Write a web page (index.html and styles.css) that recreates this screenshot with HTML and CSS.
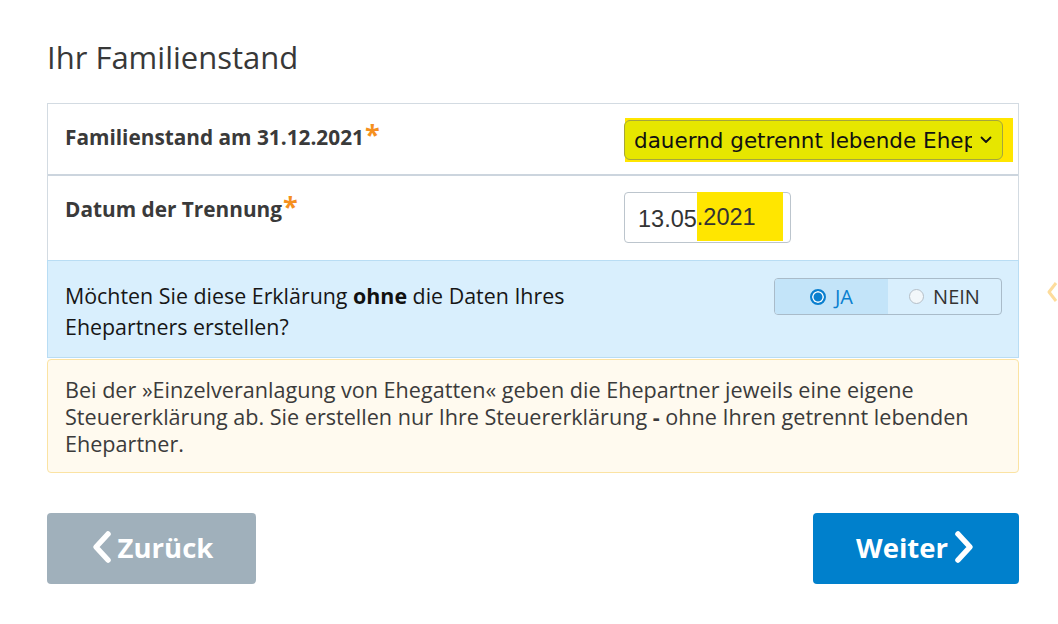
FILE: index.html
```html
<!DOCTYPE html>
<html lang="de">
  <head>
    <meta charset="UTF-8" />
    <meta name="viewport" content="width=device-width, initial-scale=1.0" />
    <title>Ihr Familienstand</title>
    <link rel="stylesheet" href="styles.css">
  </head>
  <body>
    <main class="page">
      <h1>Ihr Familienstand</h1>

      <section class="fields">
        <div class="field field-first">
          <label class="field-label">Familienstand am 31.12.2021<span class="req">*</span></label>
          <div class="field-control">
            <div class="marker">
              <div class="select-box">
                <span class="select-text">dauernd getrennt lebende Ehepartner</span>
                <svg class="select-arrow" width="12" height="8" viewBox="0 0 12 8">
                  <path d="M1.5 1.5 L6 6 L10.5 1.5" fill="none" stroke="#111" stroke-width="1.8" stroke-linecap="round" stroke-linejoin="round"/>
                </svg>
              </div>
            </div>
          </div>
        </div>

        <div class="field">
          <label class="field-label">Datum der Trennung<span class="req">*</span></label>
          <div class="field-control">
            <div class="date-box">13.05<mark>.2021</mark></div>
          </div>
        </div>
      </section>

      <section class="question">
        <p class="question-text">Möchten Sie diese Erklärung <strong>ohne</strong> die Daten Ihres Ehepartners erstellen?</p>
        <div class="toggle">
          <span class="toggle-option selected"><span class="radio"></span>JA</span>
          <span class="toggle-option"><span class="radio"></span>NEIN</span>
        </div>
      </section>

      <!-- Hinweis -->
      <div class="info">
        Bei der »Einzelveranlagung von Ehegatten« geben die Ehepartner jeweils eine eigene
        Steuererklärung ab. Sie erstellen nur Ihre Steuererklärung <b>-</b> ohne Ihren getrennt lebenden
        Ehepartner.
      </div>

      <div class="actions">
        <button class="btn btn-back">
          <svg width="24" height="34" viewBox="0 0 24 34">
            <path d="M18 4 L6 17 L18 30" fill="none" stroke="#fff" stroke-width="5.5" stroke-linecap="round" stroke-linejoin="round"/>
          </svg>
          Zurück
        </button>
        <button class="btn btn-next">
          Weiter
          <svg width="24" height="34" viewBox="0 0 24 34">
            <path d="M6 4 L18 17 L6 30" fill="none" stroke="#fff" stroke-width="5.5" stroke-linecap="round" stroke-linejoin="round"/>
          </svg>
        </button>
      </div>

      <svg class="edge-arrow" width="14" height="22" viewBox="0 0 14 22">
        <path d="M10 2 L3 11 L10 20" fill="none" stroke="#fddc9c" stroke-width="3" stroke-linejoin="round"/>
      </svg>
    </main>
  </body>
</html>
```

FILE: styles.css
```css
body {
  margin: 0;
  font-family: "Open Sans", sans-serif;
  color: #3b3b3b;
  background: #fff;
}

.page {
  position: relative;
  padding: 39px 39px 0 47px;
}

h1 {
  margin: 0 0 28px;
  font-size: 31px;
  font-weight: 400;
  line-height: 36px;
  color: #383838;
}

/* Eingabefelder */

.fields {
  border: 1px solid #d3dbe2;
  border-bottom: none;
}

.field {
  display: grid;
  grid-template-columns: 1fr 379px;
  padding: 16px 15px 17px 17px;
}

.field-first {
  padding-bottom: 14px;
  border-bottom: 2px solid #ccd5de;
}

.field-label {
  padding-top: 3px;
  font-size: 20.8px;
  font-weight: 700;
  line-height: 28px;
  color: #3a3a3a;
}

.req {
  vertical-align: top;
  margin-left: 1px;
  font-size: 27px;
  line-height: 22px;
  color: #f5901e;
}

.marker {
  position: relative;
  z-index: 0;
}

.marker::before {
  content: "";
  position: absolute;
  z-index: -1;
  left: 1px;
  right: -10px;
  top: -2px;
  bottom: -2px;
  background: #ffe600;
}

.select-box {
  display: flex;
  align-items: center;
  height: 38px;
  padding: 0 10px 0 9px;
  border: 1px solid #a5a53c;
  border-radius: 6px;
  background: #e6e600;
  font-family: "DejaVu Sans", sans-serif;
  font-size: 21.5px;
  color: #111;
}

.select-text {
  flex: 1;
  overflow: hidden;
  white-space: nowrap;
}

.select-arrow {
  margin-left: 8px;
}

.date-box {
  display: flex;
  box-sizing: border-box;
  width: 167px;
  height: 51px;
  padding: 1px 0 1px 13px;
  border: 1px solid #bcc5cd;
  border-radius: 4px;
  font-family: "Liberation Sans", Arial, sans-serif;
  font-size: 23.5px;
  line-height: 51px;
  color: #333;
}

.date-box mark {
  display: block;
  padding-right: 27px;
  line-height: 51px;
  margin-top: -2px;
  background: #ffe600;
  color: #333;
}

/* Frage */

.question {
  display: grid;
  grid-template-columns: 1fr 379px;
  padding: 17px 16px 15px 17px;
  background: #d9effd;
  border: 1px solid #b9ddf4;
}

.question-text {
  margin: 2px 0 0;
  font-size: 21.4px;
  line-height: 31px;
  color: #161616;
}

.question-text strong {
  color: #111;
}

.toggle {
  justify-self: end;
  display: flex;
  width: 228px;
  height: 37px;
  box-sizing: border-box;
  border: 1px solid #a9bbc9;
  border-radius: 4px;
  overflow: hidden;
  font-size: 20px;
}

.toggle-option {
  flex: 1;
  display: flex;
  align-items: center;
  justify-content: center;
  gap: 9px;
  color: #333;
}

.toggle-option.selected {
  background: #c3e4f9;
  color: #0a7fcf;
}

.radio {
  box-sizing: border-box;
  width: 15px;
  height: 15px;
  border: 1px solid #b5bfc8;
  border-radius: 50%;
  background: #f2f7fa;
}

.selected .radio {
  width: 16px;
  height: 16px;
  border: 2px solid #0a7fcf;
  background: #0a7fcf;
  box-shadow: inset 0 0 0 1.5px #fff;
}

/* Hinweis */

.info {
  margin-top: 1px;
  padding: 16px 17px 15px;
  background: #fffaef;
  border: 1px solid #fbe3a3;
  border-radius: 4px;
  font-size: 21.6px;
  line-height: 27px;
  color: #3b3b3b;
}

/* Buttons */

.actions {
  display: flex;
  justify-content: space-between;
  margin-top: 40px;
}

.btn {
  display: flex;
  align-items: center;
  justify-content: center;
  gap: 4px;
  height: 71px;
  padding-bottom: 4px;
  border: none;
  border-radius: 4px;
  font-family: "Open Sans", sans-serif;
  font-size: 27.5px;
  font-weight: 700;
  color: #fff;
  cursor: pointer;
}

.btn-back {
  width: 209px;
  background: #a0b0bb;
}

.btn-next {
  width: 206px;
  background: #0080cc;
}

.edge-arrow {
  position: absolute;
  left: 1046px;
  top: 281px;
}
```
